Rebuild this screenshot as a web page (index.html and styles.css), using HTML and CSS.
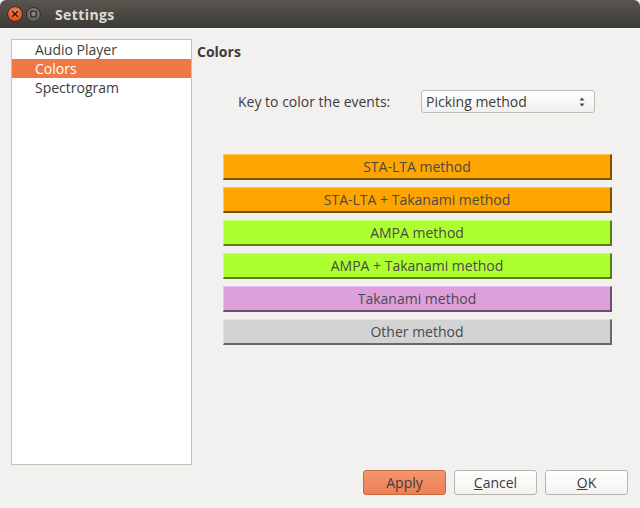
FILE: index.html
```html
<!DOCTYPE html>
<html>
<head>
<meta charset="utf-8">
<link rel="stylesheet" href="styles.css">
</head>
<body>
<div class="window">
  <div class="titlebar">
    <div class="tb-btn close">
      <svg width="14" height="14" viewBox="0 0 14 14"><path d="M4.7 4.7 L9.3 9.3 M9.3 4.7 L4.7 9.3" stroke="#3a1a0c" stroke-width="1.6" stroke-linecap="round"/></svg>
    </div>
    <div class="tb-btn max">
      <svg width="14" height="14" viewBox="0 0 14 14"><rect x="4" y="4" width="6" height="6" rx="1" fill="none" stroke="#2c2b28" stroke-width="1.4"/></svg>
    </div>
    <div class="title">Settings</div>
  </div>
  <div class="content">
    <div class="main">
      <ul class="list">
        <li class="item">Audio Player</li>
        <li class="item selected">Colors</li>
        <li class="item">Spectrogram</li>
      </ul>
      <div class="panel">
        <div class="heading">Colors</div>
        <div class="keyrow">
          <span class="keylabel">Key to color the events:</span>
          <div class="combo">
            <span>Picking method</span>
            <svg class="arrows" width="8" height="12" viewBox="0 0 8 12"><path d="M4 1.5 L6.5 4.5 L1.5 4.5 Z M4 10.5 L6.5 7.5 L1.5 7.5 Z" fill="#4a4a4a"/></svg>
          </div>
        </div>
        <div class="methods">
          <div class="method orange">STA-LTA method</div>
          <div class="method orange">STA-LTA + Takanami method</div>
          <div class="method green">AMPA method</div>
          <div class="method green">AMPA + Takanami method</div>
          <div class="method plum">Takanami method</div>
          <div class="method grey">Other method</div>
        </div>
      </div>
    </div>
    <div class="footer">
      <button class="btn apply">Apply</button>
      <button class="btn"><u>C</u>ancel</button>
      <button class="btn"><u>O</u>K</button>
    </div>
  </div>
</div>
</body>
</html>
```

FILE: styles.css
```css
* { box-sizing: border-box; }
html, body { margin: 0; padding: 0; }
body {
  width: 640px;
  height: 508px;
  background: #f2f1f0;
  font-family: "Open Sans", "Noto Sans", sans-serif;
  font-size: 14px;
  color: #3c3c3c;
  overflow: hidden;
}
.window {
  width: 640px;
  height: 508px;
  display: flex;
  flex-direction: column;
}
.titlebar {
  height: 28px;
  background: linear-gradient(#59564f, #3d3b37);
  border-radius: 6px 6px 0 0;
  display: flex;
  align-items: center;
  padding-left: 7px;
}
.tb-btn {
  border-radius: 50%;
  display: flex;
  align-items: center;
  justify-content: center;
}
.tb-btn svg { display: block; }
.close {
  width: 16px;
  height: 16px;
  background: radial-gradient(circle at 50% 35%, #f7875a, #e2501c 70%);
  border: 1px solid #3a2a20;
}
.max {
  width: 15px;
  height: 15px;
  margin-left: 3px;
  background: radial-gradient(circle at 50% 35%, #8f8b85, #65625c 70%);
  border: 1px solid #2f2e2a;
}
.title {
  margin-left: 14px;
  color: #dfdbd2;
  font-weight: bold;
  font-size: 14px;
  letter-spacing: 0.4px;
}
.content {
  flex: 1;
  display: flex;
  flex-direction: column;
  padding: 11px 12px 13px 11px;
}
.main {
  display: flex;
  gap: 5px;
}
.list {
  margin: 0;
  padding: 0;
  list-style: none;
  width: 181px;
  height: 426px;
  background: #fff;
  border: 1px solid #c4c0bb;
}
.item {
  height: 19px;
  line-height: 19px;
  padding-left: 23px;
  color: #3c3c3c;
}
.item.selected {
  background: #f07746;
  color: #fff;
}
.panel {
  flex: 1;
  display: flex;
  flex-direction: column;
}
.heading {
  font-weight: bold;
  margin-top: 3px;
  height: 20px;
  line-height: 20px;
}
.keyrow {
  display: flex;
  align-items: center;
  margin-top: 28px;
  padding-left: 41px;
  height: 23px;
}
.keylabel { width: 183px; }
.combo {
  width: 174px;
  height: 23px;
  border: 1px solid #bdb9b3;
  border-radius: 3px;
  background: linear-gradient(#fefefe, #f1f0ef);
  display: flex;
  align-items: center;
  justify-content: space-between;
  padding: 0 8px 0 4px;
}
.arrows { display: block; }
.methods {
  display: flex;
  flex-direction: column;
  gap: 7px;
  margin-top: 41px;
  padding-left: 26px;
  width: 415px;
}
.method {
  height: 26px;
  line-height: 24px;
  text-align: center;
  border-top: 1px solid rgba(255,255,255,0.35);
  border-left: 1px solid rgba(255,255,255,0.35);
  border-right: 2px solid rgba(0,0,0,0.5);
  border-bottom: 2px solid rgba(0,0,0,0.5);
  color: #4a4a4a;
}
.orange { background: #ffa500; }
.green { background: #adff2f; }
.plum { background: #dda0dd; }
.grey { background: #d3d3d3; }
.footer {
  margin-top: auto;
  display: flex;
  justify-content: flex-end;
  gap: 8px;
}
.btn {
  width: 83px;
  height: 25px;
  border: 1px solid #b8b4ae;
  border-radius: 3px;
  background: linear-gradient(#ffffff, #f3f2f1);
  font-family: inherit;
  font-size: 14px;
  color: #3c3c3c;
  padding: 0;
}
.btn.apply {
  background: linear-gradient(#f6946c, #ee7f55);
  border-color: #c2693f;
}
```
